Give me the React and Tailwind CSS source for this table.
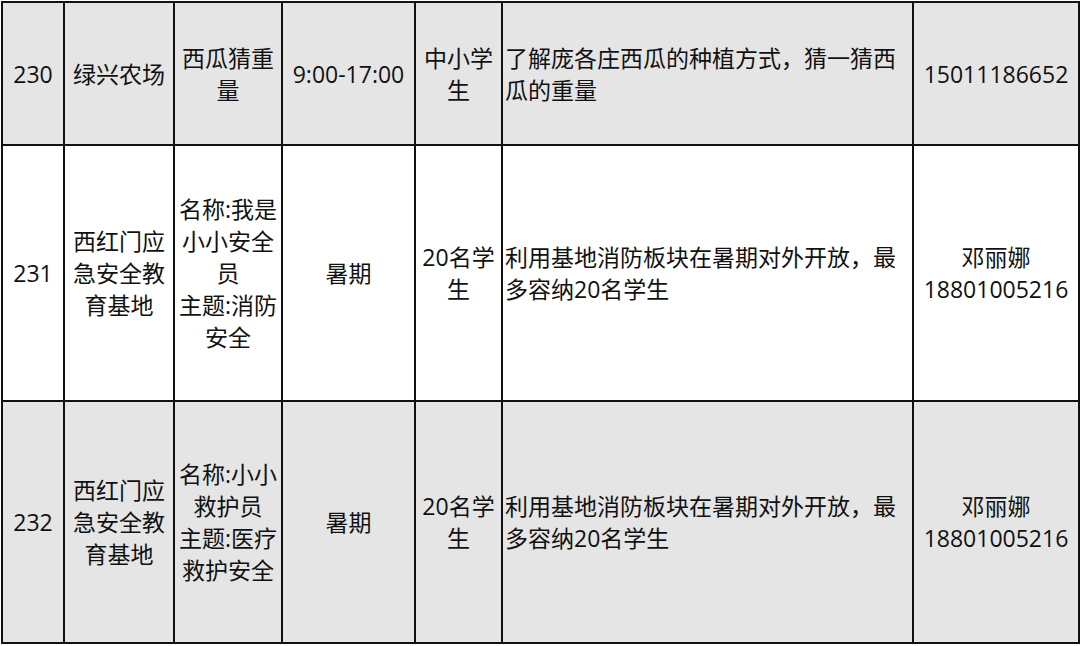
const rows = [
  {
    no: '230',
    place: '绿兴农场',
    name: ['西瓜猜重量'],
    time: '9:00-17:00',
    who: '中小学生',
    desc: '了解庞各庄西瓜的种植方式，猜一猜西瓜的重量',
    contact: ['15011186652'],
    bg: 'bg-[#e5e5e5]',
    h: 'h-[143px]',
  },
  {
    no: '231',
    place: '西红门应急安全教育基地',
    name: ['名称:我是小小安全员', '主题:消防安全'],
    time: '暑期',
    who: '20名学生',
    desc: '利用基地消防板块在暑期对外开放，最多容纳20名学生',
    contact: ['邓丽娜', '18801005216'],
    bg: 'bg-white',
    h: 'h-[256px]',
  },
  {
    no: '232',
    place: '西红门应急安全教育基地',
    name: ['名称:小小救护员', '主题:医疗救护安全'],
    time: '暑期',
    who: '20名学生',
    desc: '利用基地消防板块在暑期对外开放，最多容纳20名学生',
    contact: ['邓丽娜', '18801005216'],
    bg: 'bg-[#e5e5e5]',
    h: 'h-[242px]',
  },
];

function Lines({ items }) {
  return items.map((t, i) => <div key={i}>{t}</div>);
}

export default function App() {
  const cell = 'border-2 border-[#111] align-middle text-center px-[2px]';
  return (
    <div className="w-[1080px] h-[646px] bg-white pt-px pl-px overflow-hidden">
      <table
        className="table-fixed border-collapse w-[1077px] text-[23px] leading-[32px] text-[#111]"
        style={{ fontFamily: '"Open Sans", "Noto Sans CJK SC", sans-serif' }}
      >
        <colgroup>
          <col className="w-[62px]" />
          <col className="w-[110px]" />
          <col className="w-[108px]" />
          <col className="w-[133px]" />
          <col className="w-[87px]" />
          <col className="w-[411px]" />
          <col className="w-[166px]" />
        </colgroup>
        <tbody>
          {rows.map((r) => (
            <tr key={r.no} className={`${r.bg} ${r.h}`}>
              <td className={cell}>{r.no}</td>
              <td className={cell}>{r.place}</td>
              <td className={cell}>
                <Lines items={r.name} />
              </td>
              <td className={cell}>{r.time}</td>
              <td className={cell}>{r.who}</td>
              <td className="border-2 border-[#111] align-middle text-left px-[2px]">{r.desc}</td>
              <td className={cell}>
                <Lines items={r.contact} />
              </td>
            </tr>
          ))}
        </tbody>
      </table>
    </div>
  );
}
